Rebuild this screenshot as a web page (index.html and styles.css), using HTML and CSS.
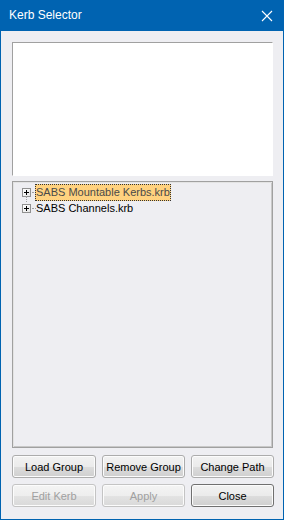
FILE: index.html
```html
<!DOCTYPE html>
<html>
<head>
<meta charset="utf-8">
<link rel="stylesheet" href="styles.css">
</head>
<body>
<div class="window">
  <div class="titlebar">
    <span class="title">Kerb Selector</span>
    <svg class="close-x" width="12" height="12" viewBox="0 0 12 12"><path d="M1 1 L11 11 M11 1 L1 11" stroke="#fff" stroke-width="1.1" fill="none"/></svg>
  </div>
  <div class="client">
    <div class="listbox"></div>
    <div class="tree">
      <div class="node">
        <span class="plus"></span><span class="hline"></span><span class="label selected">SABS Mountable Kerbs.krb</span>
      </div>
      <div class="node">
        <span class="vline"></span>
        <span class="plus"></span><span class="hline"></span><span class="label">SABS Channels.krb</span>
      </div>
    </div>
    <div class="buttons">
      <button class="btn">Load Group</button>
      <button class="btn">Remove Group</button>
      <button class="btn">Change Path</button>
      <button class="btn" disabled>Edit Kerb</button>
      <button class="btn" disabled>Apply</button>
      <button class="btn default">Close</button>
    </div>
  </div>
</div>
</body>
</html>
```

FILE: styles.css
```css
html, body {
  margin: 0;
  padding: 0;
}
body {
  width: 284px;
  height: 520px;
  overflow: hidden;
  font-family: "Liberation Sans", Arial, sans-serif;
  font-size: 11px;
}
.window {
  width: 284px;
  height: 520px;
  box-sizing: border-box;
  border: 1px solid #0063b1;
  border-top: none;
  display: flex;
  flex-direction: column;
  background: #eeeef2;
}
.titlebar {
  height: 31px;
  margin: 0 -1px;
  background: #0063b1;
  display: flex;
  align-items: center;
  justify-content: space-between;
  padding: 0 10px 0 9px;
  flex-shrink: 0;
}
.title {
  color: #fff;
  font-family: "Liberation Sans", Arial, sans-serif;
  font-size: 12px;
  position: relative;
  top: -1px;
}
.close-x {
  display: block;
  margin-right: 1px;
}
.client {
  flex: 1;
  padding: 11px 10px 12px 11px;
  display: flex;
  flex-direction: column;
}
.listbox {
  height: 134px;
  box-sizing: border-box;
  background: #fff;
  border-top: 1px solid #a0a0a0;
  border-left: 1px solid #a0a0a0;
  border-right: 1px solid #fff;
  border-bottom: 1px solid #fff;
}
.tree {
  margin-top: 5px;
  height: 267px;
  box-sizing: border-box;
  border: 1px solid #a0a0a0;
  box-shadow: inset 1px 1px 0 #e3e3e3, inset -1px -1px 0 #c8c8c8;
  background: #eeeef2;
  padding: 2px 0 0 9px;
}
.node {
  position: relative;
  height: 16px;
  display: flex;
  align-items: center;
}
.plus {
  width: 9px;
  height: 9px;
  box-sizing: border-box;
  border: 1px solid #919191;
  background: linear-gradient(135deg, #fff, #e6e6e6);
  position: relative;
  flex-shrink: 0;
}
.plus::before {
  content: "";
  position: absolute;
  left: 1px;
  top: 3px;
  width: 5px;
  height: 1px;
  background: #000;
}
.plus::after {
  content: "";
  position: absolute;
  left: 3px;
  top: 1px;
  width: 1px;
  height: 5px;
  background: #000;
}
.hline {
  width: 4px;
  height: 0;
  border-top: 1px dotted #a0a0a0;
  margin-left: 1px;
  flex-shrink: 0;
}
.vline {
  position: absolute;
  left: 4px;
  top: -4px;
  height: 6px;
  border-left: 1px dotted #a0a0a0;
}
.label {
  margin-left: -1px;
  padding: 1px 0;
  line-height: 13px;
  color: #000;
  border: 1px dotted transparent;
}
.label.selected {
  background: #ffd27f;
  color: #4a4a4a;
  border: 1px dotted #333;
}
.buttons {
  margin-top: 7px;
  display: grid;
  grid-template-columns: 84px 83px 83px;
  column-gap: 6px;
  row-gap: 6px;
}
.btn {
  height: 23px;
  margin: 0;
  padding: 0;
  font-family: "Liberation Sans", Arial, sans-serif;
  font-size: 11px;
  color: #000;
  border: 1px solid #acacac;
  border-radius: 3px;
  background: linear-gradient(#f2f2f2 0%, #ebebeb 50%, #dddddd 51%, #cfcfcf 100%);
  box-shadow: inset 0 0 0 1px #fcfcfc;
}
.btn:disabled {
  color: #a0a0a0;
  border-color: #c4c4c4;
  background: linear-gradient(#f4f4f4 0%, #eeeeee 50%, #e3e3e3 51%, #d9d9d9 100%);
}
.btn.default {
  border-color: #707070;
}
```
